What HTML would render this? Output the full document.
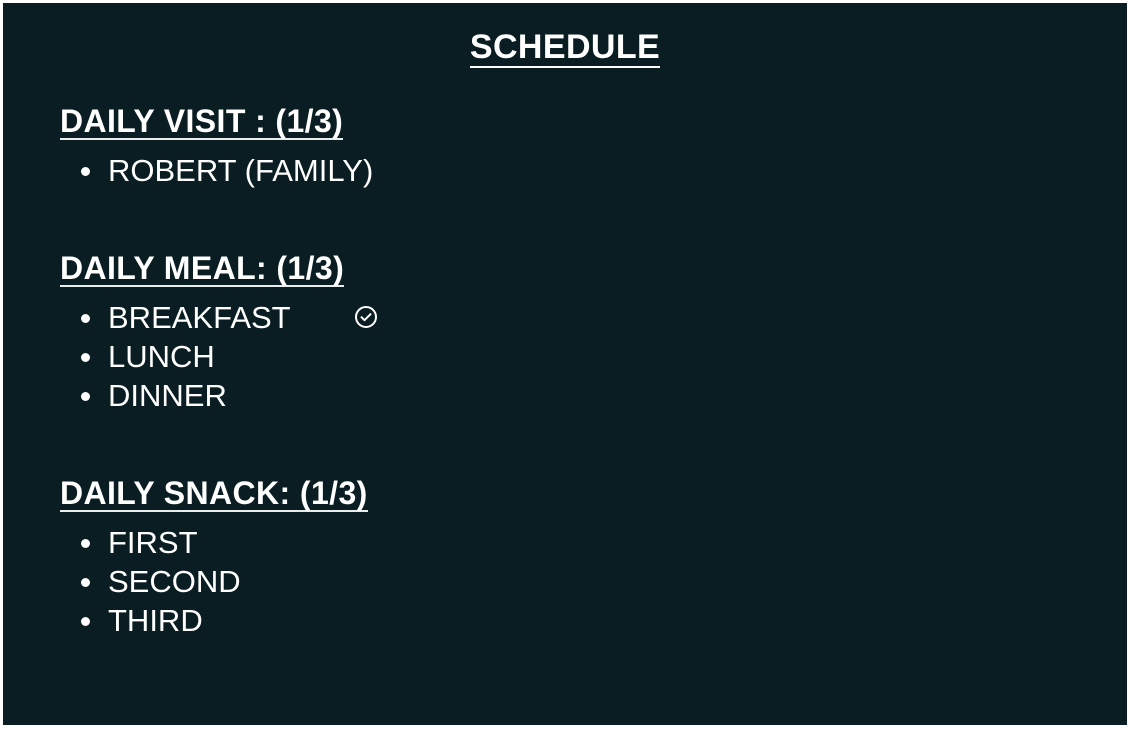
<!DOCTYPE html>
<html><head><meta charset="utf-8"><style>
html,body{margin:0;padding:0;background:#fff;width:1130px;height:738px;overflow:hidden}
.box{position:absolute;left:3px;top:3px;width:1124px;height:722px;background:#0a1d22}
*{font-family:"Liberation Sans",sans-serif;color:#fff}
.t{position:absolute;left:0;width:1130px;top:30px;text-align:center;font-size:34px;line-height:34px;font-weight:bold;letter-spacing:0.4px}
.t span{display:inline-block;border-bottom:2px solid #fff;padding-bottom:2px}
.h{position:absolute;left:60px;font-size:32px;line-height:32px;font-weight:bold;border-bottom:2px solid #e8ecec;white-space:nowrap;letter-spacing:0.4px;padding-bottom:1px}
.l{position:absolute;left:108px;font-size:31px;line-height:39px;margin:0;padding:0;list-style:none}
.l li{position:relative;white-space:nowrap;letter-spacing:0}
.l li:before{content:"";position:absolute;left:-27px;top:16px;width:9px;height:9px;border-radius:50%;background:#fff}
</style></head><body>
<div class="box"></div>
<div class="t"><span>SCHEDULE</span></div>
<div class="h" style="top:105px">DAILY VISIT : (1/3)</div>
<ul class="l" style="top:151px"><li>ROBERT (FAMILY)</li></ul>
<div class="h" style="top:252px">DAILY MEAL: (1/3)</div>
<ul class="l" style="top:298px"><li>BREAKFAST</li><li>LUNCH</li><li>DINNER</li></ul>
<svg style="position:absolute;left:354px;top:305px" width="24" height="24" viewBox="0 0 24 24"><circle cx="12" cy="12" r="10" fill="none" stroke="#fff" stroke-width="2"/><path d="M7.5 12.2l3 3 6-6" fill="none" stroke="#fff" stroke-width="2" stroke-linecap="round" stroke-linejoin="round"/></svg>
<div class="h" style="top:477px">DAILY SNACK: (1/3)</div>
<ul class="l" style="top:523px"><li>FIRST</li><li>SECOND</li><li>THIRD</li></ul>
</body></html>
